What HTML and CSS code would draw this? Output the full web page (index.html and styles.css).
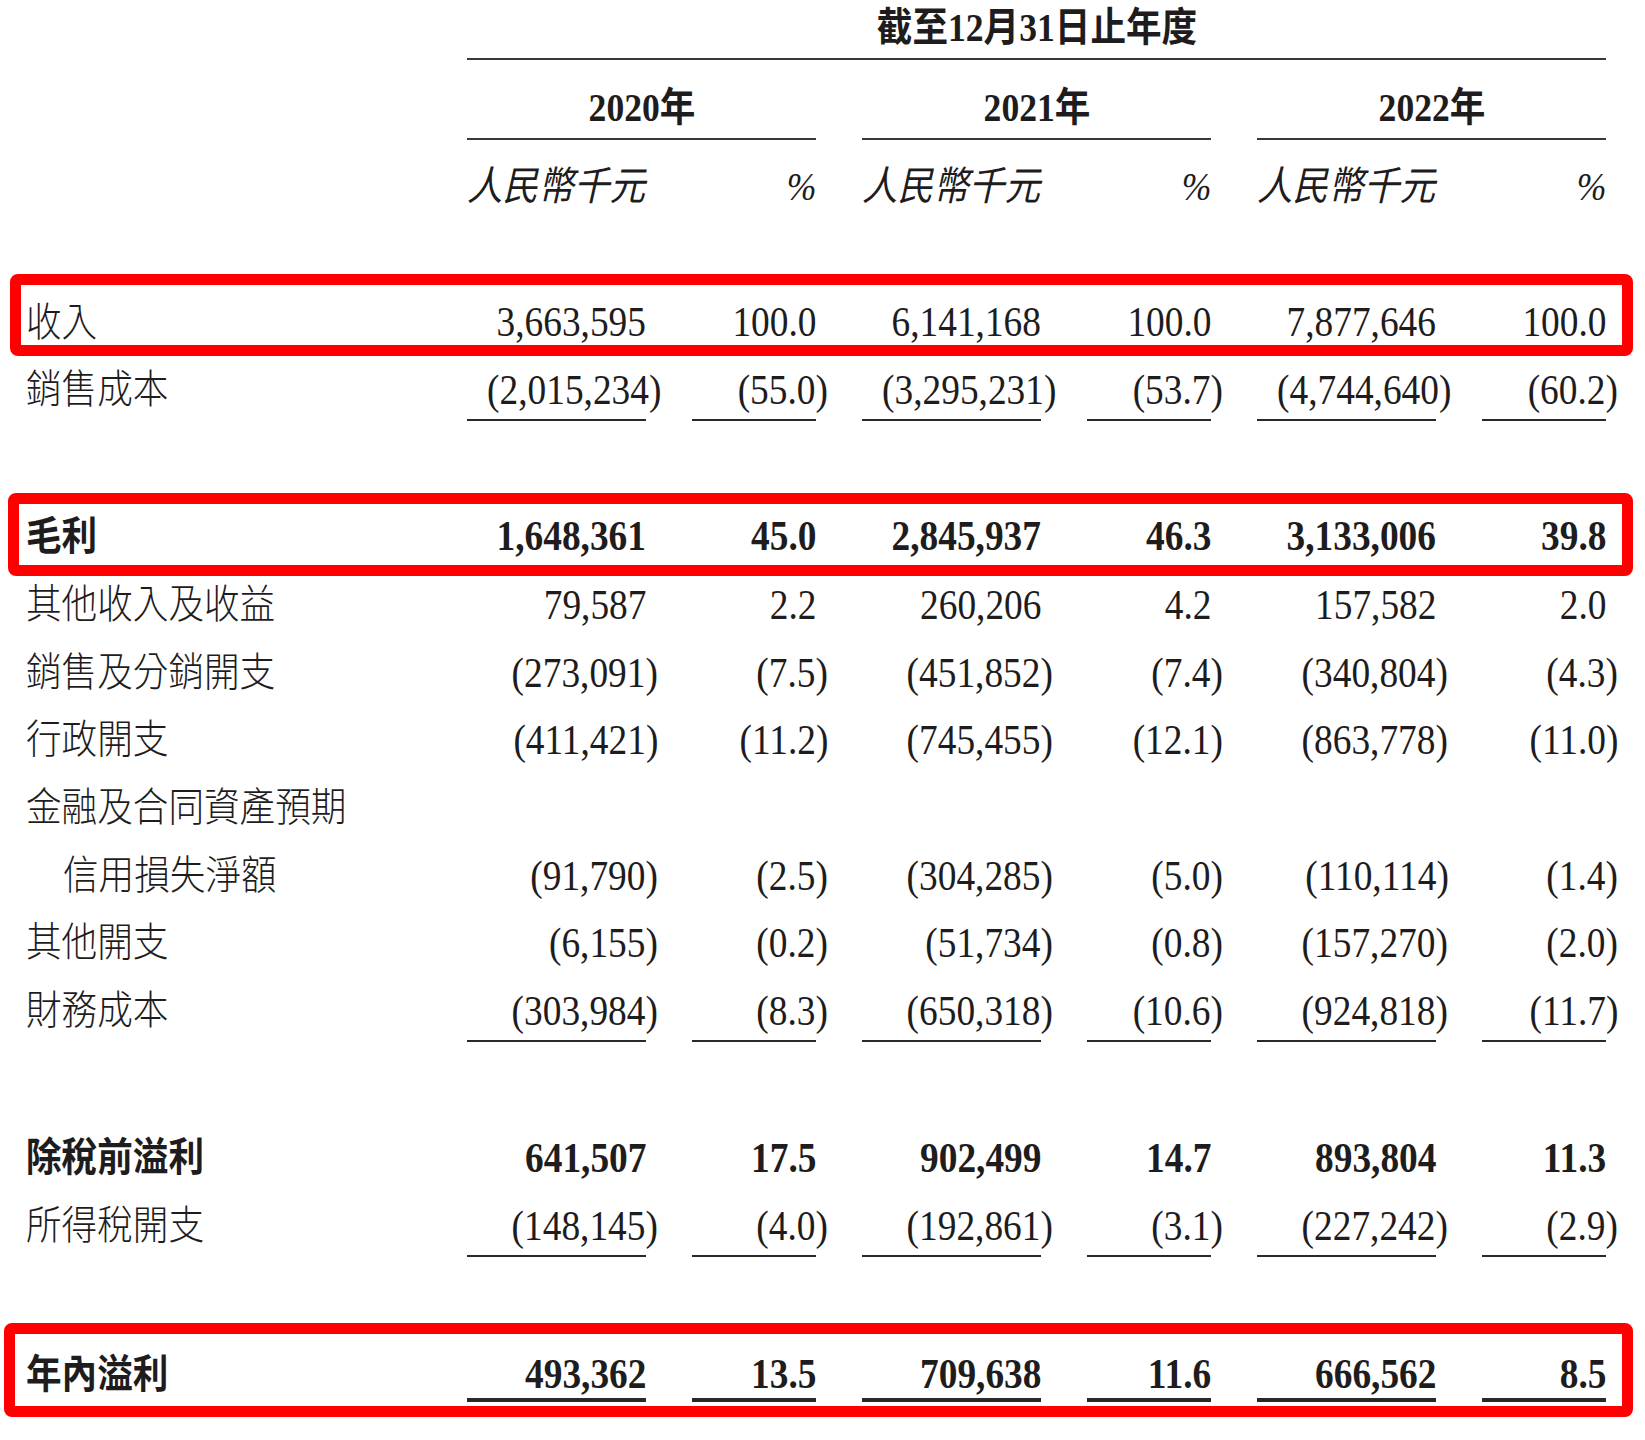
FILE: index.html
```html
<!DOCTYPE html>
<html lang="zh-Hant">
<head>
<meta charset="utf-8">
<title>損益表摘要</title>
<link rel="stylesheet" href="styles.css">
</head>
<body>
<div class="sheet">
  <div class="row title-row">
    <div class="c ttl"><span class="t">截至12月31日止年度</span></div>
  </div>
  <div class="row years">
    <div class="c yr"><span class="t">2020年</span></div>
    <div class="c yr"><span class="t">2021年</span></div>
    <div class="c yr"><span class="t">2022年</span></div>
  </div>
  <div class="row units">
    <div class="c unit"><span class="t">人民幣千元</span></div>
    <div class="c pc"><span class="t">%</span></div>
    <div class="c unit"><span class="t">人民幣千元</span></div>
    <div class="c pc"><span class="t">%</span></div>
    <div class="c unit"><span class="t">人民幣千元</span></div>
    <div class="c pc"><span class="t">%</span></div>
  </div>

  <div class="hl hl-rev">
    <div class="row">
      <div class="c lab"><span class="t">收入</span></div>
      <div class="c num"><span class="t">3,663,595</span></div>
      <div class="c pc"><span class="t">100.0</span></div>
      <div class="c num"><span class="t">6,141,168</span></div>
      <div class="c pc"><span class="t">100.0</span></div>
      <div class="c num"><span class="t">7,877,646</span></div>
      <div class="c pc"><span class="t">100.0</span></div>
    </div>
  </div>
  <div class="row">
    <div class="c lab"><span class="t">銷售成本</span></div>
    <div class="c num u"><span class="t">(2,015,234<span class="cp">)</span></span></div>
    <div class="c pc u"><span class="t">(55.0<span class="cp">)</span></span></div>
    <div class="c num u"><span class="t">(3,295,231<span class="cp">)</span></span></div>
    <div class="c pc u"><span class="t">(53.7<span class="cp">)</span></span></div>
    <div class="c num u"><span class="t">(4,744,640<span class="cp">)</span></span></div>
    <div class="c pc u"><span class="t">(60.2<span class="cp">)</span></span></div>
  </div>

  <div class="hl hl-gross">
    <div class="row b">
      <div class="c lab"><span class="t">毛利</span></div>
      <div class="c num"><span class="t">1,648,361</span></div>
      <div class="c pc"><span class="t">45.0</span></div>
      <div class="c num"><span class="t">2,845,937</span></div>
      <div class="c pc"><span class="t">46.3</span></div>
      <div class="c num"><span class="t">3,133,006</span></div>
      <div class="c pc"><span class="t">39.8</span></div>
    </div>
  </div>
  <div class="row">
    <div class="c lab"><span class="t">其他收入及收益</span></div>
    <div class="c num"><span class="t">79,587</span></div>
    <div class="c pc"><span class="t">2.2</span></div>
    <div class="c num"><span class="t">260,206</span></div>
    <div class="c pc"><span class="t">4.2</span></div>
    <div class="c num"><span class="t">157,582</span></div>
    <div class="c pc"><span class="t">2.0</span></div>
  </div>
  <div class="row">
    <div class="c lab"><span class="t">銷售及分銷開支</span></div>
    <div class="c num"><span class="t">(273,091<span class="cp">)</span></span></div>
    <div class="c pc"><span class="t">(7.5<span class="cp">)</span></span></div>
    <div class="c num"><span class="t">(451,852<span class="cp">)</span></span></div>
    <div class="c pc"><span class="t">(7.4<span class="cp">)</span></span></div>
    <div class="c num"><span class="t">(340,804<span class="cp">)</span></span></div>
    <div class="c pc"><span class="t">(4.3<span class="cp">)</span></span></div>
  </div>
  <div class="row">
    <div class="c lab"><span class="t">行政開支</span></div>
    <div class="c num"><span class="t">(411,421<span class="cp">)</span></span></div>
    <div class="c pc"><span class="t">(11.2<span class="cp">)</span></span></div>
    <div class="c num"><span class="t">(745,455<span class="cp">)</span></span></div>
    <div class="c pc"><span class="t">(12.1<span class="cp">)</span></span></div>
    <div class="c num"><span class="t">(863,778<span class="cp">)</span></span></div>
    <div class="c pc"><span class="t">(11.0<span class="cp">)</span></span></div>
  </div>
  <div class="row">
    <div class="c lab"><span class="t">金融及合同資產預期</span></div>
  </div>
  <div class="row">
    <div class="c lab indent"><span class="t">信用損失淨額</span></div>
    <div class="c num"><span class="t">(91,790<span class="cp">)</span></span></div>
    <div class="c pc"><span class="t">(2.5<span class="cp">)</span></span></div>
    <div class="c num"><span class="t">(304,285<span class="cp">)</span></span></div>
    <div class="c pc"><span class="t">(5.0<span class="cp">)</span></span></div>
    <div class="c num"><span class="t">(110,114<span class="cp">)</span></span></div>
    <div class="c pc"><span class="t">(1.4<span class="cp">)</span></span></div>
  </div>
  <div class="row">
    <div class="c lab"><span class="t">其他開支</span></div>
    <div class="c num"><span class="t">(6,155<span class="cp">)</span></span></div>
    <div class="c pc"><span class="t">(0.2<span class="cp">)</span></span></div>
    <div class="c num"><span class="t">(51,734<span class="cp">)</span></span></div>
    <div class="c pc"><span class="t">(0.8<span class="cp">)</span></span></div>
    <div class="c num"><span class="t">(157,270<span class="cp">)</span></span></div>
    <div class="c pc"><span class="t">(2.0<span class="cp">)</span></span></div>
  </div>
  <div class="row">
    <div class="c lab"><span class="t">財務成本</span></div>
    <div class="c num u"><span class="t">(303,984<span class="cp">)</span></span></div>
    <div class="c pc u"><span class="t">(8.3<span class="cp">)</span></span></div>
    <div class="c num u"><span class="t">(650,318<span class="cp">)</span></span></div>
    <div class="c pc u"><span class="t">(10.6<span class="cp">)</span></span></div>
    <div class="c num u"><span class="t">(924,818<span class="cp">)</span></span></div>
    <div class="c pc u"><span class="t">(11.7<span class="cp">)</span></span></div>
  </div>

  <div class="row b pbt">
    <div class="c lab"><span class="t">除稅前溢利</span></div>
    <div class="c num"><span class="t">641,507</span></div>
    <div class="c pc"><span class="t">17.5</span></div>
    <div class="c num"><span class="t">902,499</span></div>
    <div class="c pc"><span class="t">14.7</span></div>
    <div class="c num"><span class="t">893,804</span></div>
    <div class="c pc"><span class="t">11.3</span></div>
  </div>
  <div class="row">
    <div class="c lab"><span class="t">所得稅開支</span></div>
    <div class="c num u"><span class="t">(148,145<span class="cp">)</span></span></div>
    <div class="c pc u"><span class="t">(4.0<span class="cp">)</span></span></div>
    <div class="c num u"><span class="t">(192,861<span class="cp">)</span></span></div>
    <div class="c pc u"><span class="t">(3.1<span class="cp">)</span></span></div>
    <div class="c num u"><span class="t">(227,242<span class="cp">)</span></span></div>
    <div class="c pc u"><span class="t">(2.9<span class="cp">)</span></span></div>
  </div>

  <div class="hl hl-net">
    <div class="row b">
      <div class="c lab"><span class="t">年內溢利</span></div>
      <div class="c num uu"><span class="t">493,362</span></div>
      <div class="c pc uu"><span class="t">13.5</span></div>
      <div class="c num uu"><span class="t">709,638</span></div>
      <div class="c pc uu"><span class="t">11.6</span></div>
      <div class="c num uu"><span class="t">666,562</span></div>
      <div class="c pc uu"><span class="t">8.5</span></div>
    </div>
  </div>
</div>
</body>
</html>
```

FILE: styles.css
```css
html, body {
  margin: 0;
  padding: 0;
  background: #ffffff;
}

body {
  font-family: "Liberation Serif", "Noto Sans CJK TC", serif;
  font-size: 40px;
  color: #1e1c1c;
}

.sheet {
  padding-left: 26px;
  display: flex;
  flex-direction: column;
  align-items: flex-start;
}

.row {
  display: grid;
  grid-template-columns: 395px 179px 124px 179px 124px 179px 124px;
  column-gap: 46px;
  line-height: 58px;
}

.c {
  border-bottom: 2px solid transparent;
  white-space: nowrap;
}

.t {
  display: inline-block;
  transform: scaleX(0.89);
  transform-origin: left center;
  white-space: nowrap;
}

.lab {
  font-weight: 300;
}

.num, .pc {
  text-align: right;
  font-size: 42px;
}

.num .t, .pc .t {
  transform-origin: right center;
}

.cp {
  margin-right: -0.333em;
}

.u {
  border-bottom-color: #2a2828;
}

.b,
.b .lab {
  font-weight: 700;
}

.indent {
  padding-left: 37px;
}

/* header */
.title-row .c {
  line-height: 56px;
  padding-bottom: 2px;
}

.ttl {
  grid-column: 2 / -1;
  text-align: center;
  font-weight: 700;
  border-bottom-color: #3a3838;
}

.ttl .t, .yr .t {
  transform-origin: center center;
}

.yr {
  grid-column: span 2;
  text-align: center;
  font-weight: 700;
  border-bottom-color: #3a3838;
  line-height: 55px;
  padding-bottom: 3px;
}

.yr:first-child {
  grid-column: 2 / span 2;
}

.unit:first-child {
  grid-column-start: 2;
}

.units .c {
  font-style: italic;
  font-size: 40px;
}

/* red highlight frames */
.hl {
  border: 11px solid #ff0000;
  border-radius: 8px;
  padding-right: 16px;
}

.hl .row {
  line-height: 43px;
}

.hl .c {
  border-bottom-width: 0;
}

.hl-rev {
  margin-left: -16px;
  padding-left: 5px;
  padding-top: 16px;
  padding-bottom: 1px;
}

.hl-gross {
  margin-left: -18px;
  padding-left: 7px;
  padding-top: 11px;
  padding-bottom: 7px;
}

.hl-net {
  margin-left: -22px;
  padding-left: 11px;
  padding-top: 17px;
  padding-bottom: 4px;
}

.hl-net .row {
  line-height: 47px;
}

.hl-net .c {
  border-bottom: 4px solid transparent;
}

.hl-net .uu {
  border-bottom-color: #2a2828;
}

/* vertical rhythm */
.row + .row {
  margin-top: 7.7px;
}

.row.years {
  margin-top: 19.5px;
}

.row.units {
  margin-top: 18px;
}

.units + .hl-rev {
  margin-top: 56px;
}

.hl-rev + .row {
  margin-top: 5px;
}

.row + .hl-gross {
  margin-top: 72px;
}

.hl-gross + .row {
  margin-top: 0.5px;
}

.row.pbt {
  margin-top: 86.8px;
}

.row + .hl-net {
  margin-top: 66.8px;
}
```
